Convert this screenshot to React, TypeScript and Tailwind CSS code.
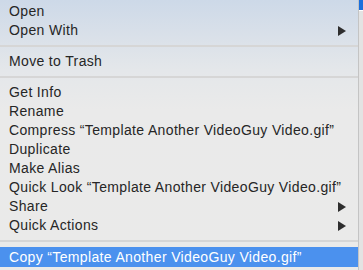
const groups: { label: string; sub?: boolean }[][] = [
  [{ label: 'Open' }, { label: 'Open With', sub: true }],
  [{ label: 'Move to Trash' }],
  [
    { label: 'Get Info' },
    { label: 'Rename' },
    { label: 'Compress “Template Another VideoGuy Video.gif”' },
    { label: 'Duplicate' },
    { label: 'Make Alias' },
    { label: 'Quick Look “Template Another VideoGuy Video.gif”' },
    { label: 'Share', sub: true },
    { label: 'Quick Actions', sub: true },
  ],
];

function Arrow() {
  return (
    <svg width="8" height="10" viewBox="0 0 8 10" className="shrink-0">
      <path d="M0 0 L8 5 L0 10 Z" fill="#2e2e2e" />
    </svg>
  );
}

function Separator() {
  return (
    <div className="h-[12px] pt-[5px]">
      <div className="h-[2px] bg-[#d6d6d6]" />
    </div>
  );
}

export default function App() {
  return (
    <div
      className="flex h-[270px] w-[363px] overflow-hidden text-[14px] tracking-[0.35px] text-[#262626]"
      style={{ fontFamily: '"Liberation Sans", Arial, sans-serif' }}
    >
      <div className="h-[270px] w-[359px] shrink-0 overflow-hidden border-r border-[#c4c4c4] bg-[linear-gradient(to_bottom,#cdd9e8_0px,#d9e0e9_35px,#e4e7ea_70px,#eaeaea_110px,#eaeae9_270px)] pt-[2px]">
        {groups.map((items, gi) => (
          <div key={gi}>
            {gi > 0 && <Separator />}
            {items.map((it) => (
              <div key={it.label} className="flex h-[19px] items-center justify-between pl-[9px] pr-[12px] leading-[19px]">
                <span className="whitespace-nowrap">{it.label}</span>
                {it.sub && <Arrow />}
              </div>
            ))}
          </div>
        ))}
        <Separator />
        <div className="flex h-[20px] items-center bg-[#4b91ee] pl-[9px] leading-[19px] text-white">
          <span className="whitespace-nowrap">Copy “Template Another VideoGuy Video.gif”</span>
        </div>
        <div className="flex h-[19px] items-center pl-[9px] leading-[19px]">
          <span className="whitespace-nowrap">Import from iPhone or iPad</span>
        </div>
      </div>
      <div className="flex w-[4px] flex-col">
        <div className="h-[10px] bg-[#1b6fdc]" />
        <div className="h-[1px] bg-white" />
        <div className="flex-1 bg-[#e3e3e3]" />
      </div>
    </div>
  );
}
